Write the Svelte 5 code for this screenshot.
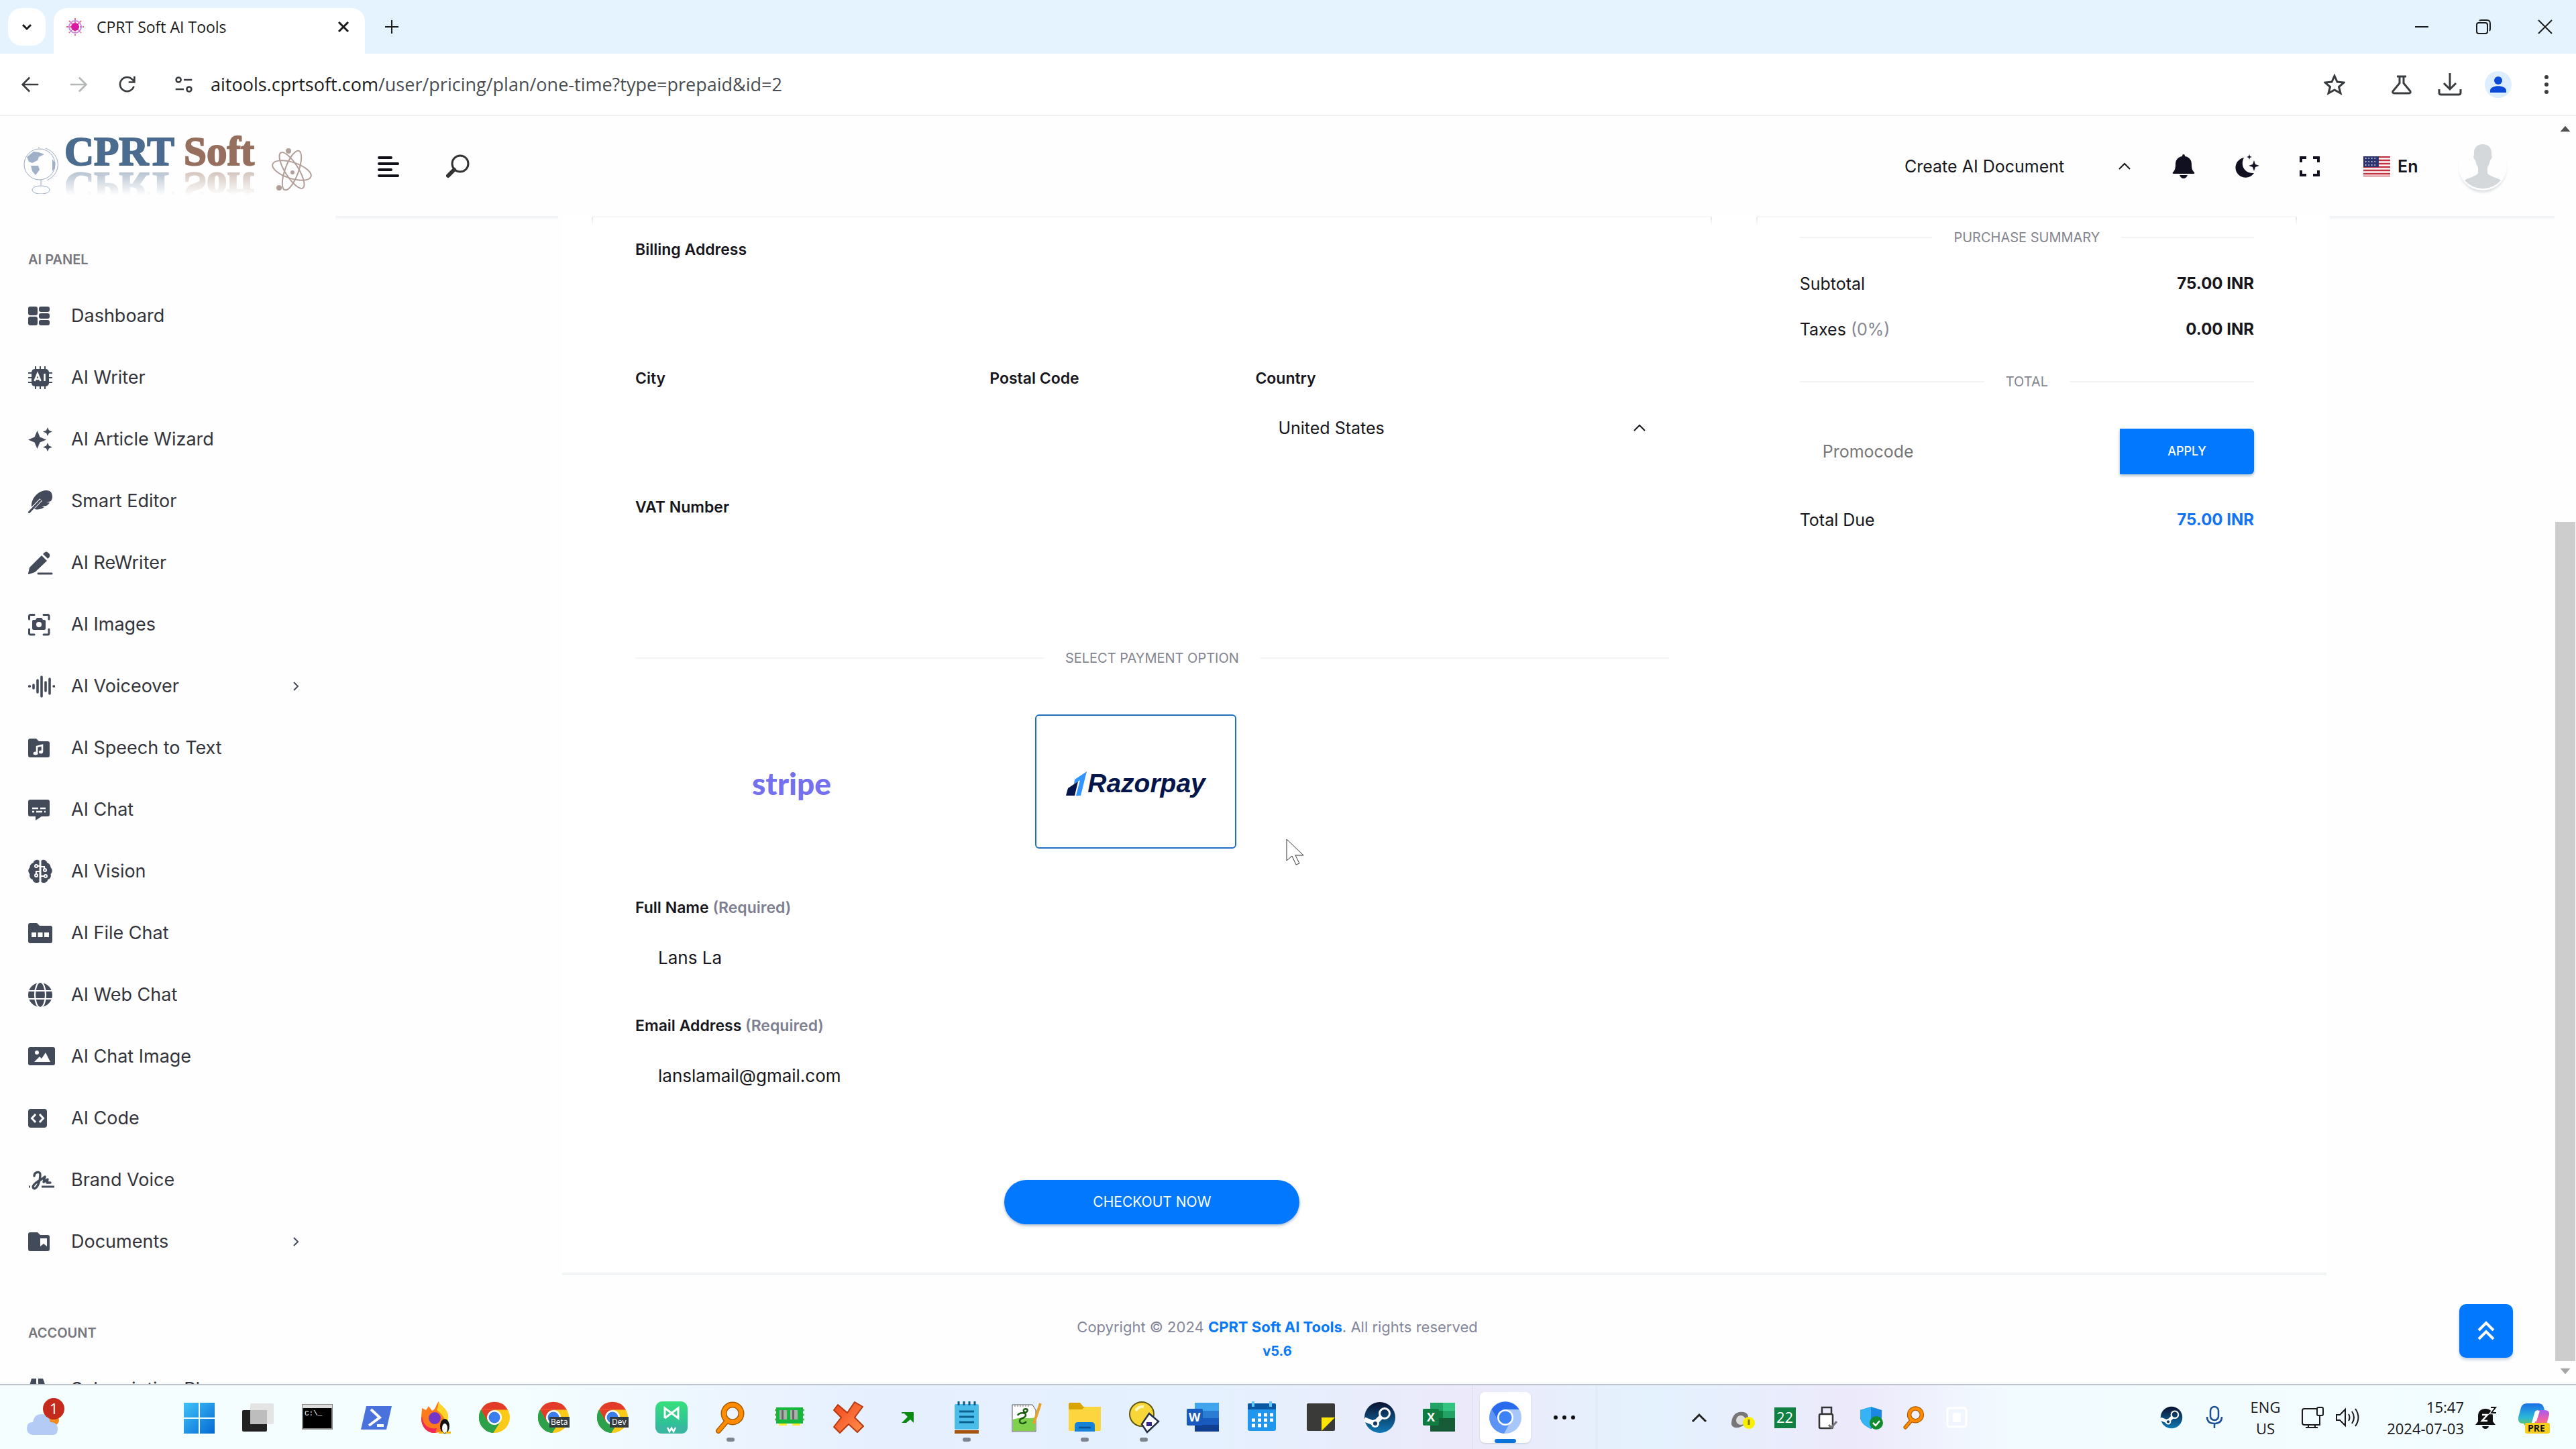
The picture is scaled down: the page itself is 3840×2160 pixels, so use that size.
<script>
  const nav = [
    { label: 'Dashboard', icon: 'dashboard' },
    { label: 'AI Writer', icon: 'chip' },
    { label: 'AI Article Wizard', icon: 'sparkles' },
    { label: 'Smart Editor', icon: 'feather' },
    { label: 'AI ReWriter', icon: 'pen' },
    { label: 'AI Images', icon: 'camera' },
    { label: 'AI Voiceover', icon: 'wave', more: true },
    { label: 'AI Speech to Text', icon: 'music' },
    { label: 'AI Chat', icon: 'chat' },
    { label: 'AI Vision', icon: 'brain' },
    { label: 'AI File Chat', icon: 'files' },
    { label: 'AI Web Chat', icon: 'globe' },
    { label: 'AI Chat Image', icon: 'image' },
    { label: 'AI Code', icon: 'code' },
    { label: 'Brand Voice', icon: 'signature' },
    { label: 'Documents', icon: 'bookmark', more: true }
  ];

  const account = [{ label: 'Subscription Plans', icon: 'box' }];

  // Sidebar glyphs, each drawn on a 40 x 36 canvas
  const glyphs = {
    dashboard: '<rect y="4" width="14" height="13" rx="3"/><rect y="19" width="14" height="13" rx="3"/><rect x="16" y="4" width="16" height="8" rx="3"/><rect x="16" y="14" width="16" height="8" rx="3"/><rect x="16" y="24" width="16" height="8" rx="3"/>',
    chip: '<rect x="5" y="5" width="26" height="26" rx="5"/><path d="M11 1v34M18 1v34M25 1v34M0 11h36M0 18h36M0 25h36" stroke="currentColor" stroke-width="2"/><path d="M9.500 23l4.500-11 4.500 11M11 20h6M24.500 12v11" stroke="#fff" stroke-width="2.600" fill="none"/>',
    sparkles: '<path d="M13.500 5l4 9.500 9.500 4-9.500 4-4 9.500-4-9.500-9.500-4 9.500-4zM29 0l2 4.500 5 2-5 2-2 4.500-2-4.500-5-2 5-2zM29 23l2 4.500 5 2-5 2-2 4.500-2-4.500-5-2 5-2z"/>',
    feather: '<path d="M5 26C4 16 13 3 26 2c7-.5 10 3 10 10 0 2-1 4-2 6l-7 2h5c-1 2-3 4-5 5l-7 1 4 1c-4 3-9 4-15 3z"/><path d="M1 34.500L19 16" stroke="#fff" stroke-width="5"/><path d="M1.500 34.500L18 17" stroke="currentColor" stroke-width="3" stroke-linecap="round"/>',
    pen: '<path d="M2 25L20 7l8 8-18 17-9 3c-1 0-1 0-1-1zM22 5l2-2c2-2 4-2 6 0l1.500 1.500c1 1.500 1 4 0 5L29.500 12z"/><path d="M15 34h20" stroke="currentColor" stroke-width="3" stroke-linecap="round"/>',
    camera: '<path d="M1.500 10V5.500a2 2 0 012-2H9M23 3.500h6a2 2 0 012 2V10M31 25v6a2 2 0 01-2 2h-6M9 33H3.500a2 2 0 01-2-2v-6" fill="none" stroke="currentColor" stroke-width="3" stroke-linecap="round"/><path d="M8 11h3l2-3h7l2 3h2q2 0 2 2v10q0 3-2 3H8q-2 0-2-3V13q0-2 2-2z"/><circle cx="16" cy="18" r="4" fill="#fff"/>',
    wave: '<path d="M1.500 18h1M8 16v5M14 9v18M20 4v29M26 12v13M32 7v22M38 18h.5" stroke="currentColor" stroke-width="3.600" stroke-linecap="round"/>',
    music: '<path d="M3 4h9l4 4h13q3 0 3 3v18q0 3-3 3H3q-3 0-3-3V7q0-3 3-3z"/><path d="M13 26V16l8-2v10" stroke="#fff" stroke-width="2.600" fill="none"/><ellipse cx="11" cy="26" rx="3.500" ry="2.500" fill="#fff"/><ellipse cx="19" cy="24" rx="3" ry="2.500" fill="#fff"/>',
    chat: '<path d="M3 3h26q3 0 3 3v19q0 3-3 3H20l-9 6v-6H3q-3 0-3-3V6q0-3 3-3z"/><path d="M6 16h9M18 16h8M6 21h3M12 21h9M24 21h2" stroke="#fff" stroke-width="2.600"/>',
    brain: '<path d="M16.500 2v32c-4 2-9 1-10-4-4-1-5-5-4-8-3-3-3-7 0-10 0-4 3-6 5-7 2-5 7-5 9-3zM19.500 2v32c4 2 9 1 10-4 4-1 5-5 4-8 3-3 3-7 0-10 0-4-3-6-5-7-2-5-7-5-9-3z"/><path d="M17 10h-3M17 18h-5v4M19 11h5v3M19 25h6" fill="none" stroke="#fff" stroke-width="2.200"/><g fill="none" stroke="#fff" stroke-width="2"><circle cx="12" cy="10" r="2"/><circle cx="12" cy="24" r="2"/><circle cx="25" cy="16" r="2"/><circle cx="26" cy="25" r="2"/></g>',
    files: '<path d="M3 3h10l4 4h16q3 0 3 3v20q0 3-3 3H3q-3 0-3-3V6q0-3 3-3z"/><path d="M5 17h7v7H5zM14.500 17h7v7h-7zM24 17h7v7h-7z" fill="#fff"/>',
    globe: '<circle cx="18" cy="18" r="18"/><path d="M0 12h36M0 24h36" stroke="#fff" stroke-width="2.200"/><ellipse cx="18" cy="18" rx="8" ry="19" fill="none" stroke="#fff" stroke-width="2.200"/>',
    image: '<rect y="4" width="40" height="27" rx="3"/><circle cx="13" cy="12" r="3" fill="#fff"/><path d="M9 26l8-8 3 3 6-9 7 14z" fill="#fff"/>',
    code: '<rect y="4" width="28" height="28" rx="4"/><path d="M11 12l-5.500 6 5.500 6M17 12l5.500 6-5.500 6" fill="none" stroke="#fff" stroke-width="3"/>',
    signature: '<path d="M1 28h2M20 28h19" stroke="currentColor" stroke-width="3"/><path d="M9 12c0-6 9-8 9-2 0 8-3 17-7 20-3 2-5-1-3-4 4-6 12-8 17-13l-2 8 6-4-1 5h5" fill="none" stroke="currentColor" stroke-width="3.400" stroke-linecap="round" stroke-linejoin="round"/>',
    bookmark: '<path d="M3 4h11l4 4h11q3 0 3 3v18q0 3-3 3H3q-3 0-3-3V7q0-3 3-3z"/><path d="M18 13h10v12l-5-4-5 4z" fill="#fff"/>',
    box: '<path d="M5 2h7v14H1zM15 2h7l5 14H15zM0 19h27v15H0z"/>'
  };

  const chrome = '<circle cx="24" cy="24" r="23" fill="#fbc918"/><path d="M4 12.500a23 23 0 0018 34.400L33 30 14 30z" fill="#2ca14a"/><path d="M4 12.500A23 23 0 0144 12.500H24z" fill="#e33b2a"/><path d="M4 12.500L14 30l10-17.500z" fill="#e33b2a"/><path d="M4 12.500a23 23 0 0018 34.400L33 30 14 30z" fill="#2ca14a"/><circle cx="24" cy="24" r="11" fill="#fff"/><circle cx="24" cy="24" r="8.500" fill="#3c7df0"/>';
  const lens = '<path d="M19 29L6 44" stroke="#a85a00" stroke-width="8" stroke-linecap="round"/><circle cx="27" cy="18" r="13" fill="none" stroke="#a85a00" stroke-width="9"/><path d="M19 29L6 44" stroke="#ff8c00" stroke-width="5" stroke-linecap="round"/><circle cx="27" cy="18" r="13" fill="none" stroke="#ff8c00" stroke-width="6"/>';
  const steam = '<circle cx="24" cy="24" r="23" fill="url(#steam)"/><circle cx="31" cy="18" r="7.500" fill="none" stroke="#fff" stroke-width="3"/><path d="M1 27l15 6 10-10" stroke="#fff" stroke-width="7" fill="none"/><circle cx="17" cy="33" r="6" fill="#fff"/><circle cx="17" cy="33" r="3" fill="#123a6b"/>';

  // Pinned taskbar programs, drawn on a 48 x 48 canvas
  const apps = [
    { name: 'Start', art: '<path d="M1 2h22v22H1zM25 2h22v22H25zM1 26h22v22H1zM25 26h22v22H25z" fill="url(#win)"/>' },
    { name: 'Task view', art: '<rect x="0" y="13" width="37" height="32" rx="2" fill="#222"/><rect x="12" y="3" width="35" height="31" rx="2" fill="#e4e4e4"/><path d="M12 13h25v21H12z" fill="#bdbdbd"/>' },
    { name: 'Command Prompt', art: '<rect x="2" y="5" width="44" height="36" fill="#000" stroke="#888" stroke-width="2"/><path d="M2 5h44v5H2z" fill="#ddd"/><text x="5" y="21" font-size="11" fill="#fff" font-family="Liberation Mono, monospace">C:\\_</text>' },
    { name: 'PowerShell', art: '<path d="M9 7h38l-8 35H1z" fill="#4a72dd"/><path d="M16 12l13 12-16 12M25 36h10" stroke="#fff" stroke-width="4" fill="none"/>' },
    { name: 'Firefox', art: '<path d="M4 10l6 3 4-6 5 7c6-2 5-8 10-14 1 7 12 8 14 22 1 15-8 25-20 25S3 38 3 25c0-6 1-10 1-15z" fill="#ff7a1a"/><path d="M29 0c1 7 12 8 14 22 1 8-2 15-6 19 4-12 0-20-11-28 2-3 2-8 3-13z" fill="#ffd527"/><circle cx="23" cy="25" r="9" fill="#7436c9"/><path d="M4 22c2 14 10 20 22 18l-2 7C12 48 3 38 3 25z" fill="#ee2b55"/><ellipse cx="38" cy="37" rx="7" ry="11" fill="#111"/><ellipse cx="38" cy="40" rx="4" ry="7" fill="#fff"/><path d="M29 47h7M40 47h7" stroke="#f5b800" stroke-width="4"/>' },
    { name: 'Chrome', art: chrome },
    { name: 'Chrome Beta', art: chrome + '<rect x="18" y="23" width="30" height="16" fill="#333b40"/><text x="20" y="35" font-size="12" fill="#fff" font-family="Open Sans, sans-serif">Beta</text>' },
    { name: 'Chrome Dev', art: chrome + '<rect x="20" y="23" width="28" height="16" fill="#333b40"/><text x="23" y="35" font-size="12" fill="#fff" font-family="Open Sans, sans-serif">Dev</text>' },
    { name: 'WebStorm', art: '<rect width="48" height="48" rx="10" fill="url(#mint)"/><path d="M14 25V10l20 15V10L14 25" fill="none" stroke="#fff" stroke-width="3"/><path d="M0 36h48v2q0 10-10 10H10Q0 48 0 38z" fill="#39b7a0"/><path d="M18 39l3 6 3-5 3 5 3-6" stroke="#fff" stroke-width="2.500" fill="none"/>' },
    { name: 'Everything', art: lens, run: true },
    { name: 'Memory', art: '<rect x="4" y="9" width="40" height="24" fill="#15b83c"/><path d="M4 13h-2M4 20h-2M4 27h-2M44 13h2M44 20h2M44 27h2" stroke="#7a5" stroke-width="3"/><path d="M9 13h11v14H9zM25 13h11v14H25z" fill="#a9b0a9"/><path d="M12 13h3v14h-3zM28 13h3v14h-3z" fill="#666"/><path d="M8 33h12v3H8zM28 33h12v3H28z" fill="#ffe92a"/>' },
    { name: 'Close all', art: '<path d="M8 5l14 12L33 1l12 7-12 16 13 13-9 9-13-12L11 47 2 38l11-14L2 13z" fill="url(#fire)" stroke="#b53a10" stroke-width="2" stroke-linejoin="round"/>' },
    { name: 'Shortcut', art: '<path d="M15 16h18v16l-5-5-6 5h-7l9-9-5-5h-4z" fill="#0a8a12"/>' },
    { name: 'Notepad', art: '<rect x="6" y="4" width="36" height="38" rx="2" fill="#4bbdea"/><path d="M6 42h36v2H6z" fill="#fff"/><path d="M6 43h36v5H6z" fill="#a75412"/><path d="M12 0v6M20 0v6M28 0v6M36 0v6" stroke="#0d5a85" stroke-width="3"/><path d="M13 15h22M13 23h22M13 31h22" stroke="#0b628f" stroke-width="3"/>', run: true },
    { name: 'Notepad++', art: '<path d="M4 5h30l5 8v32H4z" fill="#fff" stroke="#555"/><path d="M5 27c12-5 22 0 33-3v20H5z" fill="#7fd04a"/><path d="M12 21c2-5 13-5 12 0s-9 3-9 8 7 5 10 1M21 12c4-2 7 0 5 3s-6 1-5-3" stroke="#1d5a12" stroke-width="2.500" fill="none"/><path d="M46 3L36 33" stroke="#e6a22a" stroke-width="4"/><path d="M8 5v3M12 5v3M16 5v3M20 5v3M24 5v3M28 5v3" stroke="#777" stroke-width="1"/>' },
    { name: 'File Explorer', art: '<path d="M0 4q0-2 2-2h15l5 6h24q2 0 2 2v8H0z" fill="#d9a400"/><path d="M0 12h20l4-4h22q2 0 2 2v32q0 2-2 2H2q-2 0-2-2z" fill="#fcd53f"/><path d="M9 45V36q0-5 5-5h20q5 0 5 5v9z" fill="#1583d8"/><path d="M15 39h18" stroke="#0a4f91" stroke-width="2.500"/>', run: true },
    { name: 'Color tool', art: '<circle cx="21" cy="19" r="18" fill="#f7d638" stroke="#5f5610" stroke-width="2"/><path d="M12 14q4-7 12-6" stroke="#fff6b8" stroke-width="4" fill="none"/><path d="M32 18l14 12-17 16-8-12z" fill="#fff" stroke="#26304a" stroke-width="2.500"/><path d="M28 31h8v6h-8z" fill="#33268c"/>', run: true },
    { name: 'Word', art: '<path d="M12 2h36v12H12z" fill="#41a5ee"/><path d="M12 14h36v11H12z" fill="#2b7cd3"/><path d="M12 25h36v10H12z" fill="#185abd"/><path d="M12 35h36v10H12z" fill="#103f91"/><rect y="11" width="24" height="25" rx="2" fill="#185abd"/><text x="3" y="30" font-size="18" font-weight="700" fill="#fff" font-family="Open Sans, sans-serif">W</text>' },
    { name: 'Calendar', art: '<rect x="3" y="3" width="42" height="41" rx="3" fill="#2196ee"/><path d="M3 12V5q0-2 2-2h38q2 0 2 2v7z" fill="#0a57a4"/><path d="M11 0v8M37 0v8" stroke="#63c8f5" stroke-width="4"/><path d="M18 20h5M27 20h5M36 20h5M9 28h5M18 28h5M27 28h5M36 28h5M9 36h5M18 36h5M27 36h5" stroke="#fff" stroke-width="5"/>' },
    { name: 'Sticky Notes', art: '<rect x="3" y="3" width="42" height="41" rx="2" fill="#3a3a38"/><path d="M25 24h20L25 44z" fill="#ffe500"/>' },
    { name: 'Steam', art: steam },
    { name: 'Excel', art: '<path d="M11 2h19v12H11z" fill="#21a366"/><path d="M30 2h18v12H30z" fill="#33c481"/><path d="M11 14h37v11H11z" fill="#107c41"/><path d="M30 14h18v11H30z" fill="#21a366"/><path d="M11 25h37v20H11z" fill="#185c37"/><rect y="11" width="24" height="25" rx="2" fill="#107c41"/><text x="6" y="30" font-size="18" font-weight="700" fill="#fff" font-family="Open Sans, sans-serif">X</text>' }
  ];

  const tray = [
    { name: 'Show hidden icons', art: '<path d="M14 30l10-10 10 10" fill="none" stroke="#222" stroke-width="3"/>' },
    { name: 'Sync warning', art: '<path d="M8 34c0-14 8-20 18-18s8 12 2 18-18 8-20 0z" fill="#777"/><circle cx="22" cy="28" r="7" fill="#ddd"/><circle cx="34" cy="32" r="9" fill="#f8f000"/><path d="M34 27v8" stroke="#8a7a00" stroke-width="3"/>' },
    { name: 'Monitor', art: '<rect x="8" y="9" width="32" height="31" fill="#108043"/><text x="11" y="32" font-size="22" fill="#fff" font-family="Open Sans, sans-serif">22</text>' },
    { name: 'Eject media', art: '<rect x="15" y="9" width="14" height="10" fill="none" stroke="#333" stroke-width="2.500"/><rect x="11" y="19" width="20" height="21" rx="2" fill="#fff" stroke="#333" stroke-width="2.500"/><path d="M25 35l4 4 8-9" fill="none" stroke="#777" stroke-width="3"/>' },
    { name: 'Security', art: '<path d="M24 8l16 5v10c0 9-8 14-16 18-8-4-16-9-16-18V13z" fill="#1c86e3"/><path d="M24 8v33c-8-4-16-9-16-18V13z" fill="#35b3f5"/><circle cx="32" cy="32" r="10" fill="#128c2e"/><path d="M27 32l4 4 6-7" fill="none" stroke="#fff" stroke-width="2.500"/>' },
    { name: 'Search tool', art: '<g transform="translate(7 7) scale(.72)">' + lens + '</g>' },
    { name: 'Background app', art: '<rect x="10" y="10" width="28" height="28" rx="3" fill="none" stroke="#fff" stroke-width="3"/><rect x="18" y="17" width="12" height="14" rx="2" fill="#fff"/>' }
  ];

  let country = $state('United States');
  let fullName = $state('Lans La');
  let email = $state('lanslamail@gmail.com');
  let payment = $state('razorpay');
</script>

{#snippet navItem(item)}
  <li>
    <a href="#{item.icon}" class="nav-link">
      <svg class="nav-icon" viewBox="0 0 40 36" aria-hidden="true">{@html glyphs[item.icon]}</svg>
      <span>{item.label}</span>
      {#if item.more}
        <svg class="nav-more" viewBox="0 0 12 16" aria-hidden="true"><path d="M3 2l6 6-6 6" /></svg>
      {/if}
    </a>
  </li>
{/snippet}

<div class="screen">
  <svg class="defs" aria-hidden="true">
    <defs>
      <linearGradient id="win" x1="0" y1="0" x2="1" y2="1"><stop stop-color="#3fc3f8" /><stop offset="1" stop-color="#0569d3" /></linearGradient>
      <linearGradient id="mint" x1="0" y1="0" x2="0" y2="1"><stop stop-color="#36e07c" /><stop offset="1" stop-color="#2bb3a3" /></linearGradient>
      <linearGradient id="fire" x1="0" y1="0" x2="1" y2="1"><stop stop-color="#f2441a" /><stop offset="1" stop-color="#ff9150" /></linearGradient>
      <linearGradient id="steam" x1="0" y1="0" x2="0" y2="1"><stop stop-color="#0b1230" /><stop offset="1" stop-color="#1079b4" /></linearGradient>
      <linearGradient id="copilot-a" x1="0" y1="0" x2="0" y2="1"><stop stop-color="#1b6fe8" /><stop offset=".6" stop-color="#2bb8d8" /><stop offset="1" stop-color="#7cc84a" /></linearGradient>
      <linearGradient id="copilot-b" x1="0" y1="0" x2="0" y2="1"><stop stop-color="#a45cf0" /><stop offset=".5" stop-color="#ee5fa6" /><stop offset="1" stop-color="#f98a5c" /></linearGradient>
    </defs>
  </svg>

  <div class="tabstrip">
    <button class="tab-search" aria-label="Search tabs"><svg viewBox="0 0 24 24"><path d="M6 9l6 6 6-6" /></svg></button>
    <div class="tab">
      <svg class="favicon" viewBox="0 0 28 28" aria-hidden="true"><path d="M14 1v26M1 14h26M5 5l18 18M23 5L5 23" stroke="#f0668a" stroke-width="2" stroke-dasharray="3 1" /><circle cx="14" cy="14" r="9" fill="none" stroke="#c98ae0" /><circle cx="14" cy="14" r="6" fill="#d81ba0" /></svg>
      <span class="tab-title">CPRT Soft AI Tools</span>
      <button class="tab-close" aria-label="Close tab"><svg viewBox="0 0 24 24"><path d="M5 5l14 14M19 5L5 19" /></svg></button>
    </div>
    <button class="tab-new" aria-label="New tab"><svg viewBox="0 0 24 24"><path d="M12 2v20M2 12h20" /></svg></button>
    <div class="window-buttons">
      <button aria-label="Minimize"><svg viewBox="0 0 24 24"><path d="M2 12h20" /></svg></button>
      <button aria-label="Restore"><svg viewBox="0 0 24 24"><rect x="2" y="6" width="16" height="16" rx="3" /><path d="M6 3q1-1 3-1h8q5 0 5 5v8q0 2-1 3" /></svg></button>
      <button aria-label="Close"><svg viewBox="0 0 24 24"><path d="M2 2l20 20M22 2L2 22" /></svg></button>
    </div>
  </div>

  <div class="toolbar">
    <button class="nav-button" aria-label="Back"><svg viewBox="0 0 32 32"><path d="M30 16H3M15 4L3 16l12 12" /></svg></button>
    <button class="nav-button disabled" aria-label="Forward" disabled><svg viewBox="0 0 32 32"><path d="M2 16h27M17 4l12 12-12 12" /></svg></button>
    <button class="nav-button" aria-label="Reload"><svg viewBox="0 0 32 32"><path d="M28 19a12 12 0 11-3-12l4 4M29 2v10H19" /></svg></button>
    <button class="nav-button site" aria-label="View site information"><svg viewBox="0 0 32 32"><circle cx="7" cy="8" r="4" /><path d="M16 8h14M2 24h14" /><circle cx="25" cy="24" r="4" /></svg></button>
    <div class="url"><span class="host">aitools.cprtsoft.com</span><span>/user/pricing/plan/one-time?type=prepaid&amp;id=2</span></div>
    <button class="star" aria-label="Bookmark this page"><svg viewBox="0 0 32 32"><path d="M16 3l4 9 10 1-7.500 6.500L25 29l-9-5-9 5 2.500-9.500L2 13l10-1z" /></svg></button>
    <button aria-label="Experiments"><svg viewBox="0 0 32 32"><path d="M9 4h14M13 4v10L3 26q-1 3 2 3h22q3 0 2-3L19 14V4" /></svg></button>
    <button aria-label="Downloads"><svg class="big" viewBox="0 0 36 36"><path d="M18 1v24M9 16l9 9 9-9M2 25v5q0 3 3 3h26q3 0 3-3v-5" /></svg></button>
    <button aria-label="Profile"><span class="profile"><svg viewBox="0 0 24 24"><circle cx="12" cy="6" r="6" /><path d="M0 24v-3c0-9 24-9 24 0v3z" /></svg></span></button>
    <button aria-label="Browser menu"><svg viewBox="0 0 32 32"><path d="M16 5v.1M16 16v.1M16 27v.1" class="dots" /></svg></button>
  </div>

  <div class="viewport">
    <div class="page">
      <header class="topbar">
        <a class="brand" href="#home" aria-label="CPRT Soft home">
          <svg class="brand-globe" viewBox="0 0 54 70" aria-hidden="true">
            <circle cx="25" cy="26" r="23" /><path d="M34 2c22 8 26 36 2 48M27 49v8M14 64c0-8 26-8 26 0s-26 8-26 0zM24 2v-2" />
            <path class="land" d="M6 15l10-8 8 1 8 3-8 4-2 5-8 4-5-2zM12 28h11l2 6-6 8-5-6zM44 18l4 6v8l-4 4z" />
          </svg>
          <span class="brand-name"><span class="cprt">CPRT</span> <span class="soft">Soft</span></span>
          <svg class="brand-atom" viewBox="0 0 60 68" aria-hidden="true">
            <ellipse cx="30" cy="34" rx="10" ry="31" transform="rotate(-32 30 34)" /><ellipse cx="30" cy="34" rx="10" ry="31" transform="rotate(20 30 34)" /><ellipse cx="30" cy="34" rx="12" ry="30" transform="rotate(-72 30 34)" />
            <circle class="dot" cx="25" cy="5" r="4" /><circle class="dot" cx="11" cy="60" r="4" /><circle class="dot" cx="31" cy="37" r="3" />
          </svg>
        </a>
        <button class="plain" aria-label="Toggle sidebar"><svg viewBox="0 0 34 34"><path d="M3 4h18M3 13h28M3 22h18M3 31h28" class="bars" /></svg></button>
        <button class="plain search" aria-label="Search"><svg viewBox="0 0 36 36"><circle cx="21" cy="14" r="12" /><path d="M12 23L3 32" class="handle" /></svg></button>
        <div class="select doc-select">
          <select aria-label="Create document"><option>Create AI Document</option></select>
          <svg viewBox="0 0 20 12" aria-hidden="true"><path d="M2 10l8-8 8 8" /></svg>
        </div>
        <button class="tool" aria-label="Notifications"><svg viewBox="0 0 36 36"><path d="M18 0q2 0 2 3c7 1 10 6 10 12 0 6 1 9 4 12q1 2-1 2H3q-2 0-1-2c3-3 4-6 4-12C6 9 9 4 16 3q0-3 2-3zM12 31h12q-2 5-6 5t-6-5z" /></svg></button>
        <button class="tool" aria-label="Dark mode"><svg viewBox="0 0 36 36"><path d="M14 5c-6 12 1 24 15 23A15 15 0 1114 5zM29 9l2 6 6 2-6 2-2 6-2-6-6-2 6-2zM22 0l1 3 3 1-3 1-1 3-1-3-3-1 3-1z" /></svg></button>
        <button class="tool" aria-label="Full screen"><svg viewBox="0 0 36 36"><path d="M5 12V5h8M23 5h8v7M31 24v7h-8M13 31H5v-7" class="corners" /></svg></button>
        <button class="lang" aria-label="Language: En">
          <svg viewBox="0 0 40 30" aria-hidden="true"><path fill="#fff" d="M0 0h40v30H0z" /><path d="M0 1h40M0 6h40M0 11h40M0 16h40M0 21h40M0 26h40M0 30h40" stroke="#c0323f" stroke-width="2.400" /><path fill="#2c3570" d="M0 0h23v16H0z" /><path d="M3 3h18M3 8h18M3 13h18" stroke="#fff" stroke-width="1.500" stroke-dasharray="1.500 3" /></svg>
          <span>En</span>
        </button>
        <button class="avatar" aria-label="Account"><svg viewBox="0 0 72 72"><path d="M36 3c9 0 14 6 13 16 2 3 0 6-2 8-1 6-3 8-4 11v8c2 5 16 7 20 11a36 36 0 01-54 0c4-4 18-6 20-11v-8c-1-3-3-5-4-11-2-2-4-5-2-8C22 9 27 3 36 3z" /></svg></button>
      </header>

      <aside class="sidebar">
        <h2>AI PANEL</h2>
        <ul>{#each nav as item}{@render navItem(item)}{/each}</ul>
        <h2 class="second">ACCOUNT</h2>
        <ul>{#each account as item}{@render navItem(item)}{/each}</ul>
      </aside>

      <main>
        <div class="checkout">
          <form class="card billing" onsubmit={(e) => e.preventDefault()}>
            <div class="field"><label for="address">Billing Address</label><input id="address" type="text" /></div>
            <div class="row">
              <div class="field city"><label for="city">City</label><input id="city" type="text" /></div>
              <div class="field postal"><label for="postal">Postal Code</label><input id="postal" type="text" /></div>
              <div class="field country">
                <label for="country">Country</label>
                <div class="select">
                  <select id="country" bind:value={country}><option>United States</option></select>
                  <svg viewBox="0 0 20 12" aria-hidden="true"><path d="M2 10l8-8 8 8" /></svg>
                </div>
              </div>
            </div>
            <div class="field"><label for="vat">VAT Number</label><input id="vat" type="text" /></div>

            <div class="divider pay-title"><span>SELECT PAYMENT OPTION</span></div>

            <div class="options">
              <label class="option" class:chosen={payment === 'stripe'}>
                <input type="radio" name="gateway" value="stripe" bind:group={payment} />
                <span class="stripe">stripe</span>
              </label>
              <label class="option" class:chosen={payment === 'razorpay'}>
                <input type="radio" name="gateway" value="razorpay" bind:group={payment} />
                <svg class="razor-mark" viewBox="0 0 32 36" aria-hidden="true"><path d="M13 12L31 0 22 36H15l6-23-9 6z" fill="#3395ff" /><path d="M3 25l15-10-5 21H0z" fill="#03154a" /></svg>
                <span class="razor">Razorpay</span>
              </label>
            </div>

            <div class="field half"><label for="name">Full Name <span>(Required)</span></label><input id="name" type="text" bind:value={fullName} /></div>
            <div class="field half"><label for="email">Email Address <span>(Required)</span></label><input id="email" type="email" bind:value={email} /></div>
            <button class="pay">CHECKOUT NOW</button>
          </form>

          <section class="card summary">
            <div class="divider"><span>PURCHASE SUMMARY</span></div>
            <p class="line subtotal"><span>Subtotal</span><b>75.00 INR</b></p>
            <p class="line"><span>Taxes <i>(0%)</i></span><b>0.00 INR</b></p>
            <div class="divider total"><span>TOTAL</span></div>
            <div class="promo"><input type="text" placeholder="Promocode" aria-label="Promocode" /><button>APPLY</button></div>
            <p class="line due"><span>Total Due</span><b>75.00 INR</b></p>
          </section>
        </div>
      </main>

      <footer>
        <p>Copyright © 2024 <a href="#site">CPRT Soft AI Tools</a>. All rights reserved</p>
        <p class="version">v5.6</p>
      </footer>
      <button class="to-top" aria-label="Back to top"><svg viewBox="0 0 32 32"><path d="M5 15L16 4l11 11M5 28l11-11 11 11" /></svg></button>
      <svg class="cursor" viewBox="0 0 28 42" aria-hidden="true"><path d="M1 1v32l8-7 6 13 5-2-6-12h12z" /></svg>
    </div>

    <div class="scrollbar" aria-hidden="true">
      <svg viewBox="0 0 20 12"><path d="M10 1l9 10H1z" fill="#505050" /></svg>
      <div class="thumb"></div>
      <svg viewBox="0 0 20 12"><path d="M10 11L1 1h18z" fill="#a3a3a3" /></svg>
    </div>
  </div>

  <div class="taskbar">
    <button class="weather" aria-label="Widgets">
      <svg viewBox="0 0 60 60"><circle cx="42" cy="34" r="8" fill="#f28a1d" /><path d="M11 56q-9-1-9-10t9-9q2-12 13-12t13 12q11 0 11 10t-9 9z" fill="#b4cbf5" /><circle cx="42" cy="17" r="16" fill="#c42b1c" /><text x="36" y="25" font-size="22" fill="#fff" font-family="Open Sans, sans-serif">1</text></svg>
    </button>
    <div class="apps">
      {#each apps as app}
        <button class:run={app.run} aria-label={app.name}><svg viewBox="0 0 48 48">{@html app.art}</svg></button>
      {/each}
    </div>
    <div class="current">
      <button class="active" aria-label="Chromium"><svg viewBox="0 0 48 48"><circle cx="24" cy="24" r="24" fill="#a7c7fb" /><path d="M3.500 12a24 24 0 0141 0H24z" fill="#2a6bee" /><path d="M3.500 12L14 30l10-18z" fill="#2a6bee" /><path d="M3.500 12A24 24 0 0022 48l10-18-18 0z" fill="#5b94f5" /><circle cx="24" cy="24" r="12" fill="#fff" /><circle cx="24" cy="24" r="9.500" fill="#3b82f6" /></svg></button>
      <button class="more" aria-label="More apps"><svg viewBox="0 0 48 48"><path d="M11 24v.1M24 24v.1M37 24v.1" stroke="#111" stroke-width="6" stroke-linecap="round" /></svg></button>
    </div>
    <div class="tray">
      {#each tray as item}
        <button aria-label={item.name}><svg viewBox="0 0 48 48">{@html item.art}</svg></button>
      {/each}
      <button class="gap" aria-label="Steam"><svg viewBox="-10 -10 68 68">{@html steam}</svg></button>
      <button aria-label="Microphone"><svg viewBox="0 0 48 48"><rect x="18" y="8" width="12" height="20" rx="6" fill="none" stroke="#1d4f91" stroke-width="2.500" /><path d="M13 23q0 10 11 10t11-10M24 33v7" fill="none" stroke="#1d4f91" stroke-width="2.500" /></svg></button>
      <button class="lang-switch">ENG<br />US</button>
      <button class="narrow" aria-label="Network"><svg viewBox="0 0 48 48"><path d="M30 11H12q-3 0-3 3v18q0 3 3 3h23V26M14 39h18M18 35v4M28 35v4M35 26v-4" class="tray-line" /><rect x="31" y="9" width="9" height="12" rx="2" class="tray-line" /></svg></button>
      <button class="narrow" aria-label="Volume"><svg viewBox="0 0 48 48"><path d="M8 20h5l8-8v24l-8-8H8zM26 19q3 5 0 10M31 15q6 9 0 18M36 11q9 13 0 26" class="tray-line" /></svg></button>
      <button class="clock">15:47<br />2024-07-03</button>
      <button aria-label="Do not disturb"><svg viewBox="0 0 48 48"><path d="M24 11c8 0 11 5 11 11v8l4 5H9l4-5v-8c0-6 3-11 11-11zM19 37h10q-1 4-5 4t-5-4z" fill="#111" /><path d="M19 20h8l-8 9h8M31 10h6l-6 8h6" fill="none" stroke="#fff" stroke-width="2.500" /><path d="M32 9h7l-6 8h7" fill="none" stroke="#111" stroke-width="2" /></svg></button>
      <button class="copilot" aria-label="Copilot preview"><svg viewBox="0 0 48 48"><path d="M31 13h9q8 0 7 7l-4 14q-2 6-8 6H18l6-6q2-2 3-8z" fill="url(#copilot-b)" /><path d="M31 3q6 0 8 6l1 4h-9q-5 0-6 5l-4 14q-2 6-6 6-4 0-6-5H8q-8 0-7-9L5 9q2-6 9-6z" fill="url(#copilot-a)" /><path d="M27 14h6l-5 16h-6z" fill="#fff" /><rect x="11" y="32" width="37" height="16" rx="3" fill="#f7ce1b" /><text x="15" y="45" font-size="14" font-weight="700" fill="#111" font-family="Open Sans, sans-serif">PRE</text></svg></button>
    </div>
  </div>
</div>

<style>
  :global(body) { margin: 0; overflow: hidden; }
  * { box-sizing: border-box; }
  button, input, select { font: inherit; color: inherit; border: 0; background: none; padding: 0; margin: 0; outline: 0; }
  button { display: flex; align-items: center; justify-content: center; cursor: pointer; }
  svg { display: block; flex: none; }
  p, h2, ul { margin: 0; padding: 0; }
  ul { list-style: none; }
  a { color: inherit; text-decoration: none; }

  .screen {
    display: flex; flex-direction: column; height: 100vh;
    font-family: Inter, 'Noto Sans', sans-serif; font-size: 25px; line-height: 32px;
    color: #16161c; background: #fff;
  }
  .defs { width: 0; height: 0; position: absolute; }

  /* Browser tabs */
  .tabstrip { display: flex; align-items: flex-end; height: 80px; padding-left: 12px; background: #e5f3fe; font-family: 'Open Sans', sans-serif; }
  .tabstrip svg { width: 24px; height: 24px; fill: none; stroke: #1c1c1c; stroke-width: 2; }
  .tab-search { width: 56px; height: 56px; margin: 0 12px 12px 0; border-radius: 20px; background: #fff; }
  .tabstrip .tab-search svg { stroke-width: 3; }
  .tab { display: flex; align-items: center; width: 464px; height: 68px; padding: 0 16px 12px 18px; background: #fff; border-radius: 20px 20px 0 0; }
  .tabstrip .favicon { width: 28px; height: 28px; stroke: none; }
  .tab-title { flex: 1; margin-left: 18px; font-size: 23px; color: #1c1c1c; }
  .tab-close { width: 32px; height: 32px; }
  .tabstrip .tab-close svg { stroke-width: 3; }
  .tab-new { width: 64px; height: 64px; margin: 0 0 8px 8px; }
  .window-buttons { display: flex; align-self: stretch; margin-left: auto; }
  .window-buttons button { width: 92px; }

  .toolbar { display: flex; align-items: center; height: 93px; padding: 0 8px 0 9px; background: #fff; border-bottom: 2px solid #f1f2f3; font-family: 'Open Sans', sans-serif; }
  .toolbar button { width: 72px; height: 72px; }
  .toolbar svg { width: 32px; height: 32px; fill: none; stroke: #3a3d40; stroke-width: 3; }
  .toolbar .nav-button svg { width: 28px; height: 28px; }
  .toolbar .big { width: 36px; height: 36px; }
  .toolbar .disabled svg { stroke: #b4b6b8; }
  .toolbar .site { margin: 0 4px 0 13px; }
  .toolbar .star { margin-right: 28px; }
  .toolbar .dots { stroke-width: 6; stroke-linecap: round; }
  .url { flex: 1; font-size: 27px; color: #4a4e52; white-space: nowrap; }
  .host { color: #1c1c1c; }
  .profile { display: flex; align-items: center; justify-content: center; width: 40px; height: 40px; border-radius: 50%; background: #dceeff; }
  .toolbar .profile svg { width: 24px; height: 24px; fill: #0b4bd8; stroke: none; }

  /* Web page */
  .viewport { display: flex; flex: 1; min-height: 0; background: #fefefe; }
  .page {
    position: relative; flex: 1; min-width: 0; overflow: hidden;
    display: grid; grid-template-columns: 500px 1fr; grid-template-rows: 149px auto 1fr;
  }
  .topbar { grid-column: 1 / -1; display: flex; align-items: center; padding: 0 71px 0 34px; }
  .brand { display: flex; align-items: center; width: 431px; height: 100px; margin-right: 84px; }
  .brand svg { fill: none; }
  .brand-globe { width: 54px; height: 70px; margin-top: 12px; stroke: #98a9c0; stroke-width: 1; }
  .brand-globe .land { fill: #9fb0c8; stroke: none; }
  .brand-atom { width: 60px; height: 68px; margin: 12px 0 0 auto; stroke: #b39f99; stroke-width: 2; }
  .brand-atom .dot { fill: #b39f99; stroke: none; }
  .brand-name {
    margin: -44px 0 0 8px; font: 700 61px/44px 'Liberation Serif', serif; white-space: nowrap;
    -webkit-text-stroke: 2px currentColor;
    -webkit-box-reflect: below 8px linear-gradient(transparent 20%, rgba(0, 0, 0, .4));
  }
  .cprt { color: #4b6c8f; -webkit-text-stroke-color: #4b6c8f; }
  .soft { color: #966f5e; -webkit-text-stroke-color: #966f5e; }
  .plain { width: 60px; height: 60px; }
  .plain svg { width: 34px; height: 34px; fill: none; stroke: #101018; stroke-width: 4; }
  .plain .bars { stroke-linecap: round; }
  .search { margin-left: 44px; }
  .search svg { width: 36px; height: 36px; stroke: #333; stroke-width: 3; }
  .search .handle { stroke-width: 6; stroke-linecap: round; }
  .select { display: grid; align-items: center; }
  .select select { grid-area: 1 / 1; height: 68px; appearance: none; }
  .select svg { grid-area: 1 / 1; justify-self: end; width: 20px; height: 12px; fill: none; stroke: #16161c; stroke-width: 2; pointer-events: none; }
  .doc-select { width: 338px; margin: 0 31px 0 auto; }
  .tool { width: 94px; height: 60px; }
  .tool svg { width: 36px; height: 36px; fill: #101020; overflow: visible; }
  .tool .corners { fill: none; stroke: #101020; stroke-width: 4; }
  .lang { width: 142px; margin-left: 33px; gap: 11px; justify-content: flex-start; font-weight: 600; }
  .lang svg { width: 40px; height: 30px; }
  .avatar { width: 72px; height: 72px; border-radius: 50%; overflow: hidden; box-shadow: 0 4px 4px -2px #cfd4da; }
  .avatar svg { width: 72px; height: 72px; fill: #d5d8da; }

  .sidebar { grid-column: 1; grid-row: 2 / 4; min-height: 0; padding-top: 49px; }
  .sidebar h2 { margin: 0 0 22px 42px; font-size: 20px; font-weight: 600; line-height: 32px; color: #76777c; }
  .sidebar .second { margin-top: 74px; }
  .nav-link { display: flex; align-items: center; height: 92px; padding: 0 53px 0 42px; font-size: 27px; color: #33343c; white-space: nowrap; }
  .nav-icon { width: 40px; height: 36px; margin-right: 24px; color: #434a5a; fill: currentColor; }
  .nav-more { width: 12px; height: 16px; margin-left: auto; fill: none; stroke: #444b5a; stroke-width: 2; }

  main { grid-column: 2; grid-row: 2; display: grid; grid-template-columns: 338px 1fr 340px; }
  main::before, main::after { content: ''; height: 6px; margin-right: 6px; background: linear-gradient(#eef0f3, #fefefe); }
  main::after { margin: 0 0 0 5px; }
  .checkout { display: grid; grid-template-columns: 1669fr 806fr; gap: 66px; padding: 0 44px; background: #fff; border-bottom: 4px solid #f0f4f5; }
  .card {
    border-top: 2px solid #f6f6f8; padding: 0 64px 72px 65px;
    background: linear-gradient(#e4e5e9, #fff) 0 0 / 2px 12px no-repeat, linear-gradient(#e4e5e9, #fff) 100% 0 / 2px 12px no-repeat;
  }
  .billing { display: flex; flex-direction: column; gap: 68px; padding-top: 32px; }
  .row { display: grid; grid-template-columns: repeat(12, 1fr); gap: 44px; }
  .city { grid-column: span 4; }
  .postal { grid-column: span 3; }
  .country { grid-column: span 5; }
  .field { display: flex; flex-direction: column; gap: 24px; min-width: 0; }
  .field label { font-size: 23px; font-weight: 600; }
  .field label span { color: #7e8091; }
  .field input, .field select { width: 100%; height: 68px; padding: 0 34px; }
  .field input { font-size: 26px; }
  .field .select svg { margin-right: 34px; }
  .half { width: 50%; }
  .half + .half { margin-top: -16px; }
  .divider { display: flex; align-items: center; gap: 32px; font-size: 20px; color: #83858f; white-space: nowrap; }
  .divider::before, .divider::after { content: ''; flex: 1; height: 2px; background: #f4f4f6; }
  .pay-title { margin-top: 33px; }
  .options { display: flex; gap: 213px; margin-bottom: 4px; padding-left: 83px; }
  .option { display: flex; align-items: center; justify-content: center; width: 300px; height: 200px; padding-top: 6px; border: 2px solid transparent; border-radius: 6px; cursor: pointer; }
  .option input { appearance: none; width: 0; height: 0; }
  .chosen { border-color: #1f6fc4; }
  .stripe { font: 900 46px/52px Lato, sans-serif; color: #7470ee; }
  .razor-mark { width: 32px; height: 36px; }
  .razor { font: italic 700 39px/48px 'Liberation Sans', sans-serif; color: #03154a; }
  .pay { width: 440px; height: 66px; margin-top: 54px; align-self: center; border-radius: 33px; background: #0278fe; color: #fff; font-size: 21px; box-shadow: 0 2px 4px #a9b7c9; }

  .summary { padding-top: 14px; }
  .line { display: flex; justify-content: space-between; margin-top: 36px; }
  .line b { font-size: 24px; }
  .line i { font-style: normal; color: #85868f; }
  .subtotal { margin-top: 37px; }
  .summary .total { margin-top: 46px; }
  .promo { display: flex; height: 68px; margin-top: 54px; }
  .promo input { flex: 1; min-width: 0; padding-left: 34px; }
  .promo input::placeholder { color: #777; opacity: 1; }
  .promo button { width: 200px; border-radius: 0 6px 6px 0; background: #0278fe; color: #fff; font-size: 18px; font-weight: 500; box-shadow: 0 2px 4px #a9b7c9; }
  .due { margin-top: 52px; }
  .due b { color: #1273f5; }

  footer { grid-column: 1 / -1; grid-row: 3; justify-self: center; padding-top: 61px; text-align: center; font-size: 22px; color: #84869a; }
  footer a, .version { font-weight: 700; color: #0878f8; }
  .version { margin-top: 4px; font-size: 20px; }
  .to-top { position: absolute; right: 62px; bottom: 39px; width: 80px; height: 80px; border-radius: 10px; background: #0278fe; box-shadow: 0 3px 4px #c5d2e2; }
  .to-top svg { width: 32px; height: 32px; fill: none; stroke: #fff; stroke-width: 4; }
  .cursor { position: absolute; left: 1917px; top: 1077px; width: 28px; height: 42px; fill: #fff; stroke: #333; stroke-width: 1; }

  .scrollbar { display: flex; flex-direction: column; align-items: center; width: 32px; padding: 14px 0; }
  .scrollbar svg { width: 18px; height: 10px; }
  .thumb { width: 30px; flex: 1; margin: 581px 0 10px; background: #cdcdcd; }

  /* Taskbar */
  .taskbar {
    display: flex; height: 97px; border-top: 2px solid #bcc3ca; font-family: 'Open Sans', sans-serif;
    background: linear-gradient(90deg, #f4feff 0 20%, #e6effe 34%, #e5f1fe 47%, #ebe9fa 57%, #e4f2fe 64%, #ece9fb 72%, #f2fbff 78%, #f3feff);
  }
  .weather { width: 253px; padding-left: 38px; justify-content: flex-start; }
  .weather svg { width: 60px; height: 60px; }
  .apps, .current, .tray { display: flex; }
  .apps button { position: relative; width: 88px; }
  .apps svg, .active svg, .more svg { width: 48px; height: 48px; }
  .apps .run::after { content: ''; position: absolute; bottom: 11px; left: 38px; width: 12px; height: 6px; border-radius: 3px; background: #7d848f; }
  .current { align-items: center; width: 186px; margin-left: 6px; padding-left: 10px; gap: 8px; border: solid #dcdcec; border-width: 0 1px; }
  .active { position: relative; width: 76px; height: 76px; border-radius: 8px; background: #fff; box-shadow: 0 1px 2px #c4cad6; }
  .active::after { content: ''; position: absolute; bottom: 0; left: 22px; width: 32px; height: 6px; border-radius: 3px; background: #0a74dc; }
  .more { width: 84px; }
  .tray { margin-left: auto; padding-right: 23px; font-size: 22px; }
  .tray button { width: 64px; }
  .tray svg { width: 48px; height: 48px; }
  .tray .gap { margin-left: 256px; }
  .tray .lang-switch { width: 88px; text-align: center; }
  .tray .narrow { width: 52px; }
  .tray .clock { width: 148px; justify-content: flex-end; text-align: right; white-space: nowrap; }
  .tray .copilot { width: 80px; }
  .tray-line { fill: none; stroke: #1a1a1a; stroke-width: 2; }
</style>
